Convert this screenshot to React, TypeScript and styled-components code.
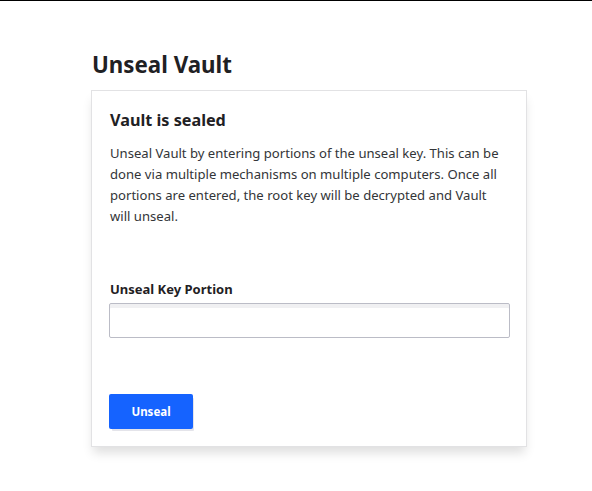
import React from "react";
import styled, { createGlobalStyle } from "styled-components";

const Global = createGlobalStyle`
  html, body { margin: 0; padding: 0; background: #fff; }
  body {
    border-top: 1px solid #000;
    font-family: "Noto Sans", "Open Sans", sans-serif;
    color: #1f2124;
  }
`;

const Page = styled.main`
  padding: 45px 0 40px 91px;
`;

const Column = styled.div`
  width: 436px;
  display: flex;
  flex-direction: column;
`;

const PageTitle = styled.h1`
  margin: 0 0 7px 1px;
  font-size: 22.3px;
  line-height: 37px;
  font-weight: 700;
  color: #1f2124;
`;

const Card = styled.section`
  box-sizing: border-box;
  border: 1px solid #e2e2e4;
  background: #fff;
  box-shadow: 0 8px 10px -2px rgba(0, 0, 0, 0.13);
  padding: 16px 16px 17px 17px;
  display: flex;
  flex-direction: column;
`;

const CardTitle = styled.h2`
  margin: 0 0 10px 1px;
  font-size: 16.2px;
  line-height: 26px;
  font-weight: 700;
`;

const Body = styled.p`
  margin: 0 0 0 1px;
  font-size: 13.1px;
  line-height: 20.9px;
  color: #333538;
`;

const Field = styled.div`
  margin-top: 53px;
  display: flex;
  flex-direction: column;
  gap: 5px;
`;

const Label = styled.label`
  margin-left: 1px;
  font-size: 13px;
  line-height: 18px;
  font-weight: 700;
`;

const Input = styled.input`
  box-sizing: border-box;
  width: 401px;
  height: 35px;
  border: 1px solid #bbbcc6;
  border-radius: 2px;
  box-shadow: inset 0 4px 0 #f0f0f2;
  outline: none;
  font: inherit;
`;

const Actions = styled.div`
  margin-top: 56px;
  display: flex;
`;

const Button = styled.button`
  width: 84px;
  height: 35px;
  border: none;
  border-radius: 2px;
  background: #1563ff;
  color: #fff;
  font-family: inherit;
  font-size: 11.5px;
  font-weight: 700;
  box-shadow: 2px 3px 0 -1px #e4e4ea;
  cursor: pointer;
`;

export default function App() {
  return (
    <>
      <Global />
      <Page>
        <Column>
          <PageTitle>Unseal Vault</PageTitle>
          <Card>
            <CardTitle>Vault is sealed</CardTitle>
            <Body>
              Unseal Vault by entering portions of the unseal key. This can be
              done via multiple mechanisms on multiple computers. Once all
              portions are entered, the root key will be decrypted and Vault
              will unseal.
            </Body>
            <Field>
              <Label htmlFor="key">Unseal Key Portion</Label>
              <Input id="key" type="password" />
            </Field>
            <Actions>
              <Button>Unseal</Button>
            </Actions>
          </Card>
        </Column>
      </Page>
    </>
  );
}
